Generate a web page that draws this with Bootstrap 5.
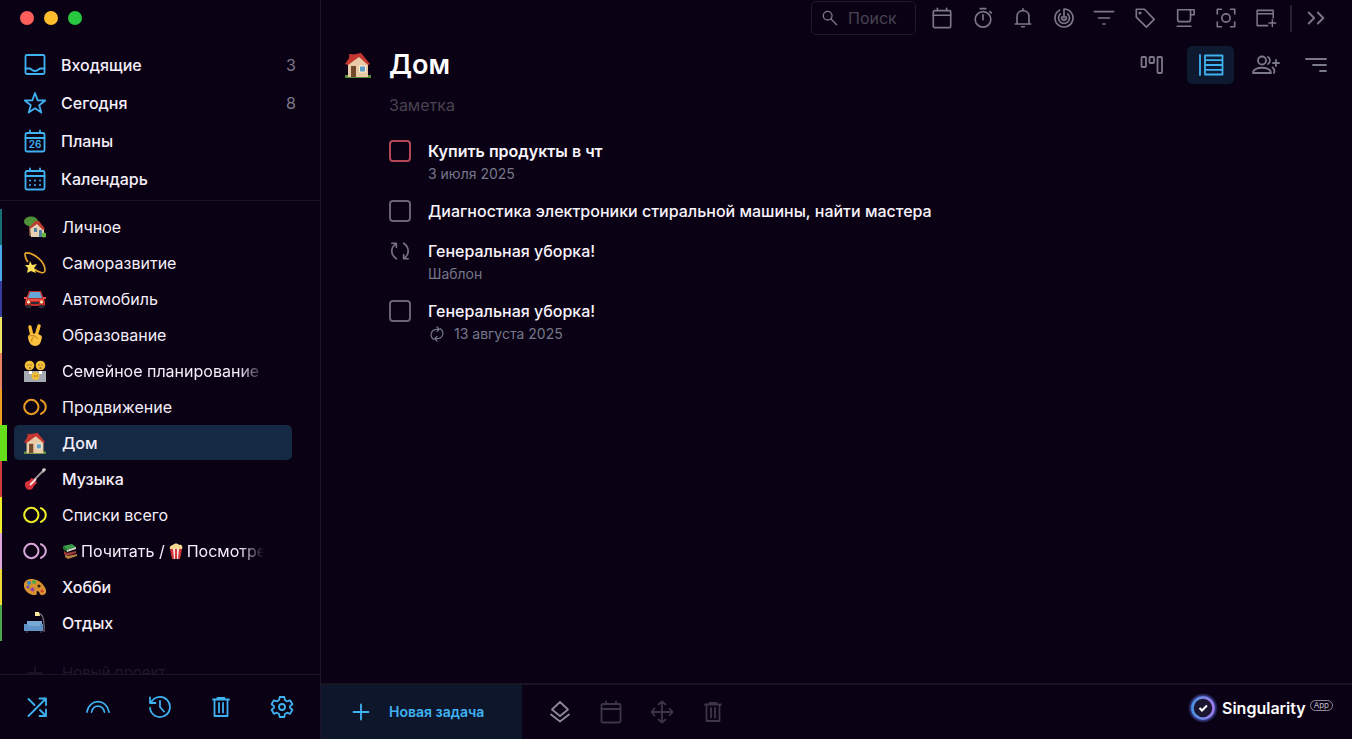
<!DOCTYPE html>
<html lang="ru" data-bs-theme="dark">
<head>
<meta charset="utf-8">
<meta name="viewport" content="width=device-width, initial-scale=1">
<title>Дом — Singularity App</title>
<link href="https://cdn.jsdelivr.net/npm/bootstrap@5.3.0/dist/css/bootstrap.min.css" rel="stylesheet">
<style>
  :root { --ink: #0b0114; --line: #1d1527; --sky: #3fb2f2; --mute: #7b788a; --dim: #3c3747; }
  body { background: var(--ink); color: #f4effa; font-family: Inter, "Noto Sans", sans-serif; font-size: 16px; line-height: 24px; }
  a { color: inherit; text-decoration: none; }
  svg { flex: none; display: block; }
  .ico { width: 24px; height: 24px; fill: none; stroke: currentColor; stroke-width: 1.8; stroke-linecap: round; stroke-linejoin: round; }
  .emo { width: 22px; height: 22px; }
  .side { width: 321px; border-right: 1px solid var(--line); }
  .dots { height: 47px; padding: 11px 20px; gap: 10px; }
  .dot { width: 14px; height: 14px; border-radius: 50%; }
  .top-list { padding-bottom: 2px; border-bottom: 1px solid var(--line); font-weight: 500; }
  .top-list a { height: 38px; padding: 0 24px 0 23px; gap: 14px; }
  .top-list .ico { color: var(--sky); }
  .count { color: var(--mute); font-weight: 400; }
  .projects { padding-top: 8px; overflow: hidden; min-height: 0; }
  .proj { height: 36px; padding: 0 28px 0 12px; border-left: 2px solid var(--tag, transparent); }
  .proj span { gap: 16px; padding: 0 10px; height: 35px; border-radius: 5px; width: 278px; }
  .proj.picked { border-left: 7px solid #66e01a; padding-left: 7px; }
  .proj.picked span { background: #152844; }
  .proj .ico { stroke-width: 2.2; overflow: visible; }
  .proj b { font-weight: 400; white-space: nowrap; overflow: hidden; width: 202px; display: flex; align-items: center; gap: 3px; }
  .proj.strong b, .proj.picked b { font-weight: 500; }
  .fade-end { -webkit-mask-image: linear-gradient(90deg, #000 88%, transparent); mask-image: linear-gradient(90deg, #000 88%, transparent); }
  .proj b svg { width: 16px; height: 16px; }
  .ghost { color: #1f182a; margin-top: 14px; font-size: 15px; }
  .ghost .ico { stroke-width: 1.4; }
  .side-foot { height: 65px; border-top: 1px solid var(--line); padding: 0 26px 0 25px; color: var(--sky); }
  .plain { background: none; border: 0; padding: 0; color: inherit; }
  .bar { height: 36px; padding: 0 25px 0 0; color: var(--mute); gap: 13px; }
  .bar .ico { width: 22px; height: 22px; }
  .tools { width: 346px; margin-left: 2px; }
  .find { width: 105px; height: 34px; border: 1px solid #211a2b; border-radius: 5px; padding: 0 10px; gap: 10px; }
  .find input { background: none; border: 0; padding: 0; width: 60px; color: #fff; outline: 0; }
  .find input::placeholder { color: #484352; opacity: 1; }
  .find .ico { width: 16px; height: 16px; stroke-width: 2; }
  .vline { width: 2px; height: 27px; background: #262030; }
  .head { padding: 10px 24px 0 23px; gap: 17px; }
  .head h1 { font-size: 27px; line-height: 38px; font-weight: 600; margin: 0; color: #fff; }
  .views { color: var(--mute); }
  .views .on { background: #0d1a2f; color: var(--sky); width: 47px; height: 38px; border-radius: 5px; margin: 0 18px 0 23px; }
  .body-col { padding: 9px 68px 0; }
  .note { color: #484352; background: none; border: 0; padding: 0; height: 24px; width: 100%; outline: 0; }
  .note::placeholder { color: #484352; opacity: 1; }
  .tasks { margin-top: 21px; gap: 14px; }
  .task { gap: 17px; }
  .task .mark-box { width: 22px; height: 26px; }
  .task input { width: 22px; height: 22px; margin: 0; background-color: transparent; border: 2px solid #686372; border-radius: 5px; }
  .task .hot { border-color: #b54657; }
  .task label, .task .name { line-height: 26px; font-weight: 500; color: #f8f4fc; }
  .task .bold { font-weight: 600; }
  .sub { font-size: 14px; line-height: 20px; color: #74788a; gap: 8px; }
  .main-foot { height: 56px; border-top: 2px solid #191421; }
  .add { width: 201px; padding: 0 28px; gap: 16px; background: #0e162b; color: var(--sky); font-size: 14px; font-weight: 600; }
  .acts { gap: 27px; padding-left: 26px; color: var(--dim); }
  .brand { font-size: 16px; font-weight: 600; color: #fff; gap: 4px; padding: 0 19px 8px 0; }
  .pill { border: 1px solid #8d8996; border-radius: 8px; font-size: 8px; line-height: 9px; padding: 0 3px; font-weight: 400; color: #bbb7c4; margin-bottom: 6px; }
</style>
</head>
<body>
<svg width="0" height="0" class="position-absolute" aria-hidden="true">
  <defs>
    <radialGradient id="halo"><stop offset=".68" stop-color="#5468dc"/><stop offset="1" stop-color="#5468dc" stop-opacity="0"/></radialGradient>
    <linearGradient id="ringc" x1="0" x2="1"><stop stop-color="#4b93df"/><stop offset="1" stop-color="#a07bea"/></linearGradient>
  </defs>
  <symbol id="inbox" viewBox="0 0 24 24"><rect x="2.500" y="2" width="19" height="19" rx="1.500"/><path d="M2.500 15.500h4c2 0 2 2.500 5.500 2.500s3.500-2.500 5.500-2.500h4"/></symbol>
  <symbol id="star" viewBox="0 0 24 24"><path d="M12 2l2.600 7.300 7.600.2-6 4.700 2.100 7.400-6.300-4.300-6.300 4.300 2.100-7.400-6-4.700 7.600-.2z"/></symbol>
  <symbol id="cal" viewBox="0 0 24 24"><rect x="2.500" y="4" width="19" height="18.500" rx="1.500"/><path d="M2.500 9h19M7 1.500V4M17 1.500V4"/></symbol>
  <symbol id="caldots" viewBox="0 0 24 24"><use href="#cal"/><path stroke-width="2" d="M7 13.500h.01M12 13.500h.01M17 13.500h.01M7 18h.01M12 18h.01M17 18h.01"/></symbol>
  <symbol id="ring" viewBox="0 0 24 24" overflow="visible"><circle cx="8" cy="12" r="7.800"/><path d="M18.500 4.500c7 3.500 7 11.500 0 15"/></symbol>
  <symbol id="plus" viewBox="0 0 24 24"><path d="M12 4.500v15M4.500 12h15"/></symbol>
  <symbol id="shuffle" viewBox="0 0 24 24"><path d="M3.500 21L20.500 4M14.500 3.500h6.500V10M3.500 4l6 6M15 15l6 6M21 14.500V21h-6.500"/></symbol>
  <symbol id="rainbow" viewBox="0 0 26 24"><path d="M1 17.500C3.500 2.500 22.500 2.500 25 17.500M6 17.500c2-8.500 12-8.500 14 0"/></symbol>
  <symbol id="history" viewBox="0 0 24 24"><path d="M3 7.500A10 10 0 1 1 2 13M2 2.500v5.500h5.500M12 6v6l4 4.500"/></symbol>
  <symbol id="trash" viewBox="0 0 24 24"><path d="M4 4.500h16M5.500 4.500V21h13V4.500M8.500 3h7M10 8v9.500M14 8v9.500"/></symbol>
  <symbol id="gear" viewBox="0 0 24 24"><path d="M9.700 2h4.600l.6 3.100 2.200 1.300 3-1.100 2.300 4-2.400 2v1.500l2.400 2-2.300 4-3-1.100-2.200 1.300-.6 3H9.700l-.6-3-2.200-1.300-3 1.100-2.300-4 2.400-2v-1.500l-2.400-2 2.300-4 3 1.100 2.200-1.300z"/><circle cx="12" cy="12" r="3"/></symbol>
  <symbol id="lens" viewBox="0 0 24 24"><circle cx="8.500" cy="8.500" r="6.500"/><path d="M13.500 13.500L22 22"/></symbol>
  <symbol id="timer" viewBox="0 0 24 24"><circle cx="12" cy="13.500" r="8.500"/><path d="M9 1.800h6M12 8.500v5.500M19.500 5l1.500 1.500"/></symbol>
  <symbol id="bell" viewBox="0 0 24 24"><path d="M3.500 18.500h17M5.500 18.500V10C5.500 2 18.500 2 18.500 10v8.500M12 2v2M10.500 21.500h3"/></symbol>
  <symbol id="spiral" viewBox="0 0 24 24"><path d="M7.300 3.400A9.800 9.800 0 1 0 12 2.200V12M8 7.500A6 6 0 1 0 16 7.500M10 10.500a2.500 2.500 0 1 0 4 0"/></symbol>
  <symbol id="funnel" viewBox="0 0 24 24"><path d="M1.500 5h21M6 12h12M10.800 18.500h2.400"/></symbol>
  <symbol id="tag" viewBox="0 0 24 24"><path d="M2.500 2.500h9L22 13.500 13.500 22 2.500 11z"/><circle cx="6.500" cy="6.500" r=".8"/></symbol>
  <symbol id="cup" viewBox="0 0 24 24"><path d="M4 3h18v5.500h-4M18 3v10.500a2.500 2.500 0 0 1-2.500 2.500h-9A2.500 2.500 0 0 1 4 13.500V3M3.500 21h15"/></symbol>
  <symbol id="focus" viewBox="0 0 24 24"><circle cx="12" cy="12" r="4.500"/><path d="M2.500 7.500v-5H7M17 2.500h4.500v5M21.500 16.500v5H17M7 21.500H2.500v-5"/></symbol>
  <symbol id="winadd" viewBox="0 0 26 24"><path d="M15 21H2.500V3h19v9M2.500 7h19M20.500 14v8M16.500 18h8"/></symbol>
  <symbol id="chev" viewBox="0 0 24 24"><path stroke-width="2" d="M4 6l6 6-6 6M14 6l6 6-6 6"/></symbol>
  <symbol id="board" viewBox="0 0 24 24"><rect x="1.500" y="4" width="4.500" height="10" rx="1"/><rect x="9.500" y="4" width="4.500" height="6" rx="1"/><rect x="17.500" y="4" width="4.500" height="16" rx="1"/></symbol>
  <symbol id="rows" viewBox="0 0 26 24"><path d="M2 2v20M7 2.500h17.500v19H7zM7 7.200h17.500M7 12h17.500M7 16.800h17.500"/></symbol>
  <symbol id="people" viewBox="0 0 28 24"><circle cx="10" cy="7.500" r="4"/><path d="M1 20c0-7 18-7 18 0zM16 4c2.500 1 2.500 6 0 7M20.500 14.500c1.500 1 2.500 3 1.500 5.500M24 7v6M21 10h6"/></symbol>
  <symbol id="sort" viewBox="0 0 24 24"><path d="M2 6h20M9 12h13M16 18h6"/></symbol>
  <symbol id="loop" viewBox="0 0 24 24"><path d="M8 20.500C1.500 16 1.500 8.500 7.500 4M3 3.500h5V8M16 3.500c6.500 4.500 6.500 12 .5 16.500M21 20.500h-5V16"/></symbol>
  <symbol id="cycle" viewBox="0 0 24 24"><path d="M7 20C0 15 3 5 12 5h3M12 1.500L15.500 5 12 8.500M17 4c7 5 4 15-5 15H9M12 15.500L8.500 19l3.500 3.500"/></symbol>
  <symbol id="layers" viewBox="0 0 24 24"><path d="M12 2l8 7.500-8 6.500-8-6.500zM3 14.500l9 7 9-7"/></symbol>
  <symbol id="move" viewBox="0 0 24 24"><path d="M12 1.500v21M1.500 12h21M8.500 4.500L12 1.500l3.500 3M8.500 19.500l3.500 3 3.500-3M4.500 8.500l-3 3.500 3 3.500M19.500 8.500l3 3.500-3 3.500"/></symbol>

  <symbol id="e-home" viewBox="0 0 26 26"><path fill="#598c36" d="M0 23h26v3H0z"/><path fill="#a7332d" d="M4 2h4v8H4z"/><path fill="#e9cba7" d="M3 12l10-9 10 9v13H3z"/><path fill="#c53832" d="M0 12L6 3l10-2 9 11-2 1L14 5 3 13z"/><path fill="#744a2c" d="M6 14h5v11H6z"/><path fill="#5e9fc7" stroke="#fff0d5" d="M14.500 14h6v6h-6z"/></symbol>
  <symbol id="e-garden" viewBox="0 0 22 22"><path fill="#6b4931" d="M5 8h3v12H5z"/><ellipse cx="7" cy="5.500" rx="7" ry="5" fill="#4f9139"/><path fill="#e7cfb3" d="M6 12l6-6 8 7v8H7z"/><path fill="#bd3d33" d="M5 12l6-7h4l6 8-2 1-6-6-7 5z"/><path fill="#4e80a8" d="M10 12h3v4h-3zM15 14h3v7h-3z"/><circle cx="20" cy="19" r="2.500" fill="#65b53e"/></symbol>
  <symbol id="e-dizzy" viewBox="0 0 22 22"><path fill="none" stroke="#e6a72a" stroke-width="1.600" d="M1 1c9-1 20 9 20 17 0 5-7 2-11-1M1 1c0 4 1 7 3 9"/><path fill="#ffe05b" d="M6 9l2 4 5-1-3 4 2 5-5-2-4 2 1-5-3-3h4z"/></symbol>
  <symbol id="e-car" viewBox="0 0 22 22"><path fill="#c32d27" d="M5 3h12l3 8 1 2v5H1v-5l1-2z"/><path fill="#65a8d8" d="M6 4h10l2 6H4z"/><path fill="#282a34" d="M2 17h5v3H2zM15 17h5v3h-5zM7 14h8v2H7z"/><path fill="#e64e43" d="M0 9h3v2H0zM19 9h3v2h-3zM2 11h18v2H2z"/><circle cx="4.500" cy="14" r="1.500" fill="#fff0c0"/><circle cx="17.500" cy="14" r="1.500" fill="#fff0c0"/></symbol>
  <symbol id="e-peace" viewBox="0 0 22 22"><path stroke="#f7b832" stroke-width="3.400" stroke-linecap="round" d="M8 12L6 3M12 12l3-10"/><path fill="#f9c13d" d="M4 12c2-4 13-3 14 1-1 5-2 9-7 9-4 0-7-4-7-10z"/><path fill="none" stroke="#c17b1b" d="M5 12c4-1 7 0 9 3M10 13c-2 1-3 3-2 5"/></symbol>
  <symbol id="e-family" viewBox="0 0 22 22"><path fill="#a3a8b1" d="M0 11h22v11H0z"/><circle cx="5.500" cy="5.500" r="4.800" fill="#f2bd37"/><circle cx="16.500" cy="5.500" r="4.800" fill="#f2bd37"/><path fill="#fff" d="M5 11h3v3H5zM15 11h3v3h-3z"/><circle cx="11.500" cy="16" r="4" fill="#f2bd37"/><path stroke="#5b3c16" d="M3.500 5h1M6.500 5h1M14.500 5h1M17.500 5h1M10 16h1M12.500 16h1M5 8h2M15.500 8h2"/></symbol>
  <symbol id="e-guitar" viewBox="0 0 22 22"><path stroke="#a1969a" stroke-width="1.800" d="M10 12l10-10"/><path fill="#ccc7cb" d="M18 1l3-1 1 2-3 3z"/><path fill="#d4313a" d="M1 15c2-3 5-1 6-5l3 1c0 2 2 2 3 4-2 2-3 2-4 5-3 4-9 1-8-5z"/><path stroke="#f4dfe1" stroke-width="2" d="M6 17l6-6"/></symbol>
  <symbol id="e-palette" viewBox="0 0 22 22"><path fill="#d8922f" d="M0 8c2-8 15-6 20 2 4 5 2 10-3 9-2-1-1-4-4-4-1 1 1 4-2 4C5 19-1 14 0 8z"/><circle cx="5" cy="7" r="2" fill="#2e88bd"/><circle cx="10" cy="6" r="2" fill="#48a946"/><circle cx="8.500" cy="13.500" r="2" fill="#9444a3"/><circle cx="4" cy="11" r="1.500" fill="#5d4fc0"/><circle cx="15" cy="10" r="1.600" fill="#382116"/><circle cx="18" cy="15" r="1.500" fill="#d63d32"/></symbol>
  <symbol id="e-sofa" viewBox="0 0 22 22"><path fill="none" stroke="#78717a" stroke-width="1.200" d="M13 2c5-2 8 4 7 18"/><path fill="#ffe99b" d="M11 0h4l1 4h-5z"/><path fill="#78a9d5" d="M3 9h15v7H3z"/><path fill="#5f93c8" d="M0 12h4v2h12v-2h3v7H0z"/><path fill="#392b35" d="M2 19h2v2H2zM16 19h2v2h-2z"/></symbol>
  <symbol id="e-books" viewBox="0 0 16 16"><path fill="#3c9b4b" d="M1 3l9-2 4 3-9 3z"/><path fill="#d9d7cc" d="M5 7l9-3v2L5 9z"/><path fill="#287c3b" d="M1 3l4 4v2L1 6z"/><path fill="#a13c3a" d="M2 8l3 2 9-2v2l-9 3-3-2z"/><path fill="#b3803f" d="M3 12l3 1 9-2v2l-9 3-3-2z"/></symbol>
  <symbol id="e-pop" viewBox="0 0 16 16"><path fill="#f4d991" d="M2 6c-1-3 2-4 3-4 1-2 5-2 6 0 3-1 4 2 3 4z"/><path fill="#d4363a" d="M2 6h12l-2 10H4z"/><path fill="#f2e9e2" d="M5 6h2v10H6zM9 6h2l-1 10H9z"/></symbol>
</svg>

<div class="d-flex vh-100">
  <aside class="side d-flex flex-column flex-shrink-0">
    <div class="dots d-flex">
      <i class="dot" style="background:#ff5f5b"></i><i class="dot" style="background:#ffbd2e"></i><i class="dot" style="background:#28c840"></i>
    </div>
    <nav class="top-list">
      <a href="#" class="d-flex align-items-center"><svg class="ico"><use href="#inbox"/></svg><span class="flex-grow-1">Входящие</span><span class="count">3</span></a>
      <a href="#" class="d-flex align-items-center"><svg class="ico"><use href="#star"/></svg><span class="flex-grow-1">Сегодня</span><span class="count">8</span></a>
      <a href="#" class="d-flex align-items-center"><svg class="ico" viewBox="0 0 24 24"><use href="#cal"/><text x="12" y="19" text-anchor="middle" font-size="10" font-weight="600" fill="currentColor" stroke="none">26</text></svg><span>Планы</span></a>
      <a href="#" class="d-flex align-items-center"><svg class="ico"><use href="#caldots"/></svg><span>Календарь</span></a>
    </nav>
    <nav class="projects flex-grow-1">
      <a href="#" class="proj d-block" style="--tag:#176f76"><span class="d-flex align-items-center"><svg class="emo"><use href="#e-garden"/></svg><b>Личное</b></span></a>
      <a href="#" class="proj d-block" style="--tag:#4aa9e8"><span class="d-flex align-items-center"><svg class="emo"><use href="#e-dizzy"/></svg><b>Саморазвитие</b></span></a>
      <a href="#" class="proj d-block" style="--tag:#353c9c"><span class="d-flex align-items-center"><svg class="emo"><use href="#e-car"/></svg><b>Автомобиль</b></span></a>
      <a href="#" class="proj d-block" style="--tag:#eee563"><span class="d-flex align-items-center"><svg class="emo"><use href="#e-peace"/></svg><b>Образование</b></span></a>
      <a href="#" class="proj d-block" style="--tag:#e98463"><span class="d-flex align-items-center"><svg class="emo"><use href="#e-family"/></svg><b class="fade-end">Семейное планирование</b></span></a>
      <a href="#" class="proj d-block" style="--tag:#ee9e22"><span class="d-flex align-items-center"><svg class="ico emo" style="color:#e99a20"><use href="#ring"/></svg><b>Продвижение</b></span></a>
      <a href="#" class="proj d-block picked" aria-current="page"><span class="d-flex align-items-center"><svg class="emo"><use href="#e-home"/></svg><b>Дом</b></span></a>
      <a href="#" class="proj d-block strong" style="--tag:#d03b3f"><span class="d-flex align-items-center"><svg class="emo"><use href="#e-guitar"/></svg><b>Музыка</b></span></a>
      <a href="#" class="proj d-block" style="--tag:#f1ee2b"><span class="d-flex align-items-center"><svg class="ico emo" style="color:#eeee29"><use href="#ring"/></svg><b>Списки всего</b></span></a>
      <a href="#" class="proj d-block" style="--tag:#dfa5df"><span class="d-flex align-items-center"><svg class="ico emo" style="color:#d9a6dc"><use href="#ring"/></svg><b class="fade-end"><svg><use href="#e-books"/></svg>Почитать / <svg><use href="#e-pop"/></svg>Посмотре</b></span></a>
      <a href="#" class="proj d-block strong" style="--tag:#f0dc34"><span class="d-flex align-items-center"><svg class="emo"><use href="#e-palette"/></svg><b>Хобби</b></span></a>
      <a href="#" class="proj d-block strong" style="--tag:#4ba650"><span class="d-flex align-items-center"><svg class="emo"><use href="#e-sofa"/></svg><b>Отдых</b></span></a>
      <a href="#" class="proj d-block ghost"><span class="d-flex align-items-center"><svg class="ico emo"><use href="#plus"/></svg><b>Новый проект</b></span></a>
    </nav>
    <div class="side-foot d-flex align-items-center justify-content-between flex-shrink-0">
      <button class="plain" aria-label="Перемешать"><svg class="ico"><use href="#shuffle"/></svg></button>
      <button class="plain" aria-label="Радуга"><svg class="ico"><use href="#rainbow"/></svg></button>
      <button class="plain" aria-label="История"><svg class="ico"><use href="#history"/></svg></button>
      <button class="plain" aria-label="Корзина"><svg class="ico"><use href="#trash"/></svg></button>
      <button class="plain" aria-label="Настройки"><svg class="ico"><use href="#gear"/></svg></button>
    </div>
  </aside>

  <main class="d-flex flex-column flex-grow-1">
    <div class="bar d-flex align-items-center justify-content-end">
      <label class="find d-flex align-items-center"><svg class="ico"><use href="#lens"/></svg><input type="text" placeholder="Поиск" aria-label="Поиск"></label>
      <div class="tools d-flex justify-content-between">
        <button class="plain" aria-label="Календарь"><svg class="ico"><use href="#cal"/></svg></button>
        <button class="plain" aria-label="Таймер"><svg class="ico"><use href="#timer"/></svg></button>
        <button class="plain" aria-label="Уведомления"><svg class="ico"><use href="#bell"/></svg></button>
        <button class="plain" aria-label="Привычки"><svg class="ico"><use href="#spiral"/></svg></button>
        <button class="plain" aria-label="Фильтр"><svg class="ico"><use href="#funnel"/></svg></button>
        <button class="plain" aria-label="Теги"><svg class="ico"><use href="#tag"/></svg></button>
        <button class="plain" aria-label="Перерыв"><svg class="ico"><use href="#cup"/></svg></button>
        <button class="plain" aria-label="Фокус"><svg class="ico"><use href="#focus"/></svg></button>
        <button class="plain" aria-label="Новое окно"><svg class="ico"><use href="#winadd"/></svg></button>
      </div>
      <div class="vline"></div>
      <button class="plain" aria-label="Ещё"><svg class="ico"><use href="#chev"/></svg></button>
    </div>
    <header class="head d-flex align-items-center">
      <svg width="28" height="26"><use href="#e-home"/></svg>
      <h1 class="flex-grow-1">Дом</h1>
      <div class="views d-flex align-items-center">
        <button class="plain" aria-label="Доска"><svg class="ico"><use href="#board"/></svg></button>
        <button class="plain on d-flex align-items-center justify-content-center" aria-label="Список"><svg class="ico" style="width:26px"><use href="#rows"/></svg></button>
        <button class="plain" aria-label="Участники"><svg class="ico" style="width:28px"><use href="#people"/></svg></button>
        <button class="plain ms-4" aria-label="Сортировка"><svg class="ico"><use href="#sort"/></svg></button>
      </div>
    </header>
    <section class="body-col flex-grow-1">
      <input class="note" type="text" placeholder="Заметка" aria-label="Заметка">
      <div class="tasks d-flex flex-column">
        <div class="task d-flex">
          <div class="mark-box d-flex align-items-center"><input class="form-check-input hot" type="checkbox" id="t1"></div>
          <div><label class="d-block bold" for="t1">Купить продукты в чт</label><div class="sub">3 июля 2025</div></div>
        </div>
        <div class="task d-flex">
          <div class="mark-box d-flex align-items-center"><input class="form-check-input" type="checkbox" id="t2"></div>
          <label for="t2">Диагностика электроники стиральной машины, найти мастера</label>
        </div>
        <div class="task d-flex">
          <div class="mark-box d-flex align-items-center justify-content-center"><svg class="ico emo" style="color:#777281"><use href="#loop"/></svg></div>
          <div><div class="name">Генеральная уборка!</div><div class="sub">Шаблон</div></div>
        </div>
        <div class="task d-flex">
          <div class="mark-box d-flex align-items-center"><input class="form-check-input" type="checkbox" id="t3"></div>
          <div><label class="d-block" for="t3">Генеральная уборка!</label><div class="sub d-flex align-items-center"><svg class="ico" style="width:18px;height:16px"><use href="#cycle"/></svg>13 августа 2025</div></div>
        </div>
      </div>
    </section>
    <footer class="main-foot d-flex flex-shrink-0">
      <button class="plain add d-flex align-items-center"><svg class="ico"><use href="#plus"/></svg>Новая задача</button>
      <div class="acts d-flex align-items-center flex-grow-1">
        <button class="plain" aria-label="Слои" style="color:#8b8798"><svg class="ico"><use href="#layers"/></svg></button>
        <button class="plain" aria-label="Дата"><svg class="ico"><use href="#cal"/></svg></button>
        <button class="plain" aria-label="Переместить"><svg class="ico"><use href="#move"/></svg></button>
        <button class="plain" aria-label="Удалить"><svg class="ico"><use href="#trash"/></svg></button>
      </div>
      <a href="#" class="brand d-flex align-items-center">
        <svg width="30" height="30" viewBox="0 0 30 30"><circle cx="15" cy="15" r="15" fill="url(#halo)"/><circle cx="15" cy="15" r="10.500" fill="#1b1532" stroke="url(#ringc)" stroke-width="2.500"/><path d="M11.500 15l2.500 2.500 5-5" fill="none" stroke="#fff" stroke-width="2"/></svg>
        Singularity<span class="pill">App</span>
      </a>
    </footer>
  </main>
</div>
<script src="https://cdn.jsdelivr.net/npm/bootstrap@5.3.0/dist/js/bootstrap.bundle.min.js"></script>
</body>
</html>
